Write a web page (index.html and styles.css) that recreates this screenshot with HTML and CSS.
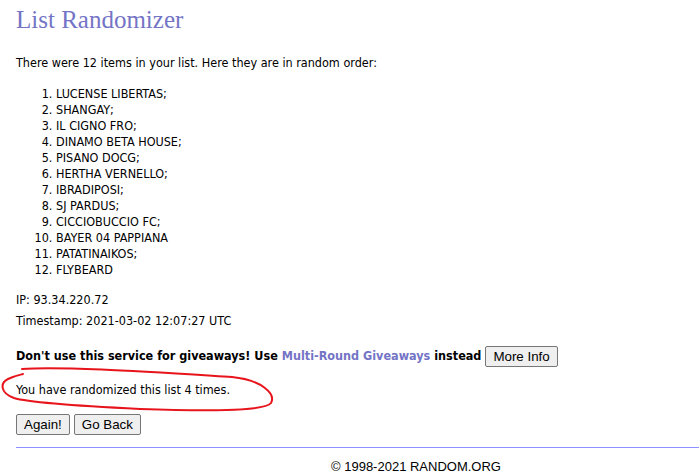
FILE: index.html
```html
<!DOCTYPE html>
<html>
<head>
<meta charset="utf-8">
<title>List Randomizer</title>
<link rel="stylesheet" href="styles.css">
</head>
<body>
<div class="page">
  <h1 class="title">List Randomizer</h1>
  <p class="intro">There were 12 items in your list. Here they are in random order:</p>
  <ol class="items">
    <li>LUCENSE LIBERTAS;</li>
    <li>SHANGAY;</li>
    <li>IL CIGNO FRO;</li>
    <li>DINAMO BETA HOUSE;</li>
    <li>PISANO DOCG;</li>
    <li>HERTHA VERNELLO;</li>
    <li>IBRADIPOSI;</li>
    <li>SJ PARDUS;</li>
    <li>CICCIOBUCCIO FC;</li>
    <li>BAYER 04 PAPPIANA</li>
    <li>PATATINAIKOS;</li>
    <li>FLYBEARD</li>
  </ol>
  <p class="meta ip">IP: 93.34.220.72</p>
  <p class="meta stamp">Timestamp: 2021-03-02 12:07:27 UTC</p>
  <div class="warn">
    <strong>Don't use this service for giveaways! Use <a class="link" href="#">Multi-Round Giveaways</a> instead</strong>
    <button class="btn">More Info</button>
  </div>
  <p class="count">You have randomized this list 4 times.</p>
  <div class="actions">
    <button class="btn">Again!</button>
    <button class="btn">Go Back</button>
  </div>
  <hr class="rule">
  <div class="footer">© 1998-2021 RANDOM.ORG</div>
</div>
<svg class="scribble" width="699" height="473" viewBox="0 0 699 473">
  <path d="M 22 369 C 60 366, 150 372, 232 377 C 262 380, 276 394, 271 403 C 264 412, 200 411, 140 409 C 80 406, 30 403, 14 398 C 0 393, 0 383, 8 379 C 14 376, 19 375, 23 374" fill="none" stroke="#e8141c" stroke-width="2" stroke-linecap="round"/>
</svg>
</body>
</html>
```
FILE: styles.css
```css
html, body {
  margin: 0;
  padding: 0;
  background: #fff;
}
body {
  font-family: "DejaVu Sans Condensed", "DejaVu Sans", sans-serif;
  font-size: 12.5px;
  line-height: 16px;
  color: #000;
  overflow: hidden;
}
.page {
  padding: 6px 0 0 16px;
}
.title {
  font-family: "Liberation Serif", "DejaVu Serif", serif;
  font-weight: normal;
  font-size: 25px;
  line-height: 28px;
  color: #7474c6;
  margin: 0;
}
.intro {
  margin: 21px 0 0;
}
.items {
  margin: 15px 0 0;
  padding-left: 40px;
}
.items li {
  line-height: 16px;
}
.meta {
  margin: 0;
}
.ip {
  margin-top: 14px;
}
.stamp {
  margin-top: 5px;
}
.warn {
  margin-top: 15px;
  display: flex;
  align-items: center;
  gap: 4px;
  height: 24px;
}
.warn strong {
  font-weight: bold;
}
.link {
  color: #7474c6;
  text-decoration: none;
}
.count {
  margin: 14px 0 0;
}
.actions {
  margin-top: 16px;
  display: flex;
  gap: 4px;
}
.btn {
  font-family: "Liberation Sans", Arial, sans-serif;
  font-size: 13.33px;
  line-height: 15px;
  color: #000;
  background: #efefef;
  border: 1px solid #767676;
  border-radius: 2px;
  padding: 2px 7px;
  margin: 0;
}
.rule {
  margin: 12px 0 0;
  border: 0;
  border-top: 1px solid #8f8fff;
  height: 0;
}
.footer {
  font-family: "Liberation Sans", Arial, sans-serif;
  font-size: 13px;
  line-height: 13px;
  text-align: center;
  padding-left: 117px;
  margin-top: 12px;
}
.scribble {
  position: absolute;
  left: 0;
  top: 0;
  pointer-events: none;
}
```
